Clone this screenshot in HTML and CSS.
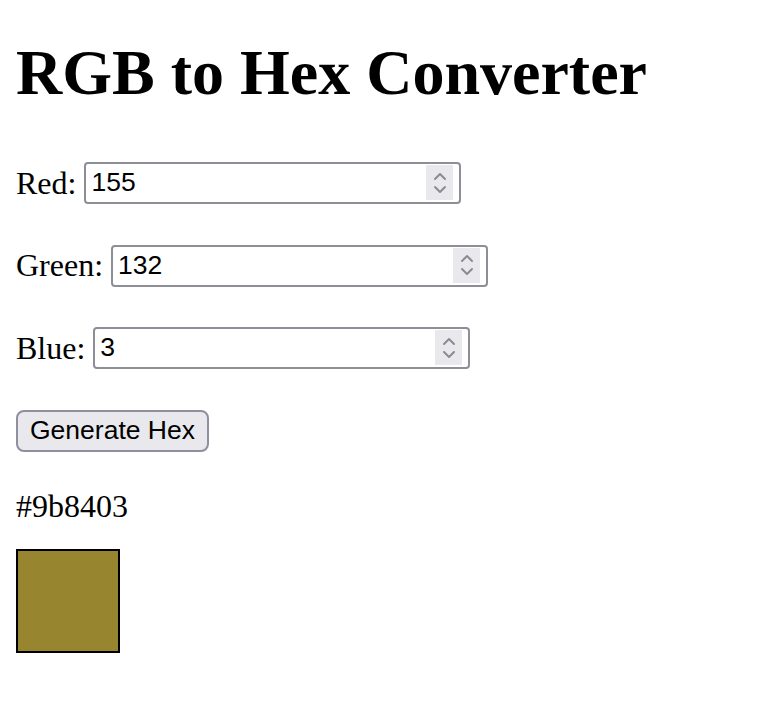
FILE: index.html
```html
<!DOCTYPE html>
<html lang="en">
<head>
<meta charset="utf-8">
<title>RGB to Hex Converter</title>
<link rel="stylesheet" href="styles.css">
</head>
<body>
<h1 class="title">RGB to Hex Converter</h1>
<div class="row">
  <label class="lbl" for="r">Red:</label>
  <span class="field"><input class="num" id="r" type="text" value="155"><span class="spin"><svg width="16" height="26" viewBox="0 0 16 26"><path d="M3 9 L8 4 L13 9 M3 17 L8 22 L13 17" fill="none" stroke="#8b8b91" stroke-width="2" stroke-linecap="round" stroke-linejoin="round"/></svg></span></span>
</div>
<div class="row">
  <label class="lbl" for="g">Green:</label>
  <span class="field"><input class="num" id="g" type="text" value="132"><span class="spin"><svg width="16" height="26" viewBox="0 0 16 26"><path d="M3 9 L8 4 L13 9 M3 17 L8 22 L13 17" fill="none" stroke="#8b8b91" stroke-width="2" stroke-linecap="round" stroke-linejoin="round"/></svg></span></span>
</div>
<div class="row">
  <label class="lbl" for="b">Blue:</label>
  <span class="field"><input class="num" id="b" type="text" value="3"><span class="spin"><svg width="16" height="26" viewBox="0 0 16 26"><path d="M3 9 L8 4 L13 9 M3 17 L8 22 L13 17" fill="none" stroke="#8b8b91" stroke-width="2" stroke-linecap="round" stroke-linejoin="round"/></svg></span></span>
</div>
<button class="btn" type="button">Generate Hex</button>
<p class="hex">#9b8403</p>
<div class="swatch"></div>
</body>
</html>
```
FILE: styles.css
```css
html, body {
  background: #ffffff;
}
body {
  margin: 0;
  padding: 0 16px;
  font-family: "Liberation Serif", "Times New Roman", serif;
  font-size: 32px;
  color: #000000;
}
.title {
  font-size: 64px;
  font-weight: bold;
  line-height: 74px;
  margin: 36px 0 52px;
}
.row {
  display: flex;
  align-items: center;
  gap: 8px;
  height: 42px;
  margin-bottom: 40.5px;
}
.lbl {
  line-height: 37px;
}
.field {
  display: flex;
  align-items: stretch;
  box-sizing: border-box;
  width: 377px;
  height: 42px;
  border: 2px solid #8e8e96;
  border-radius: 4px;
  padding: 1px 6px 2px 5px;
  background: #ffffff;
}
.num {
  flex: 1;
  min-width: 0;
  border: none;
  outline: none;
  padding: 0;
  margin: 0;
  background: transparent;
  font-family: "Liberation Sans", Arial, sans-serif;
  font-size: 26.5px;
  color: #000000;
}
.spin {
  width: 27px;
  background: #e8e8ed;
  display: flex;
  align-items: center;
  justify-content: center;
}
.btn {
  display: block;
  box-sizing: border-box;
  height: 42px;
  margin: 0;
  padding: 0 12px;
  border: 2px solid #8f8f9d;
  border-radius: 8px;
  background: #e9e9ed;
  font-family: "Liberation Sans", Arial, sans-serif;
  font-size: 26.5px;
  color: #000000;
}
.hex {
  margin: 36.5px 0 24px;
  line-height: 37px;
}
.swatch {
  width: 100px;
  height: 100px;
  border: 2px solid #000000;
  background: #978530;
}
```
